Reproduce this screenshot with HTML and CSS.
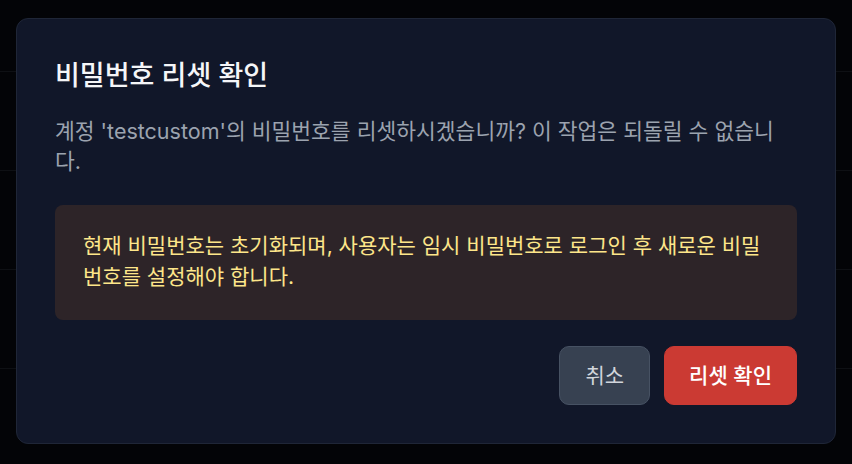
FILE: index.html
```html
<!DOCTYPE html>
<html lang="ko">
<head>
  <meta charset="UTF-8">
  <meta name="viewport" content="width=device-width, initial-scale=1.0">
  <title>비밀번호 리셋 확인</title>
  <link rel="stylesheet" href="styles.css">
</head>
<body>
  <div class="page">
    <div class="row"></div>
    <div class="row"></div>
    <div class="row"></div>
    <div class="row"></div>
  </div>

  <div class="overlay">
    <div class="modal">
      <h2 class="modal-title">비밀번호 리셋 확인</h2>
      <p class="modal-desc">계정 'testcustom'의 비밀번호를 리셋하시겠습니까? 이 작업은 되돌릴 수 없습니다.</p>
      <div class="warning">
        현재 비밀번호는 초기화되며, 사용자는 임시 비밀번호로 로그인 후 새로운 비밀번호를 설정해야 합니다.
      </div>
      <div class="actions">
        <button type="button" class="btn btn-cancel">취소</button>
        <button type="button" class="btn btn-confirm">리셋 확인</button>
      </div>
    </div>
  </div>
</body>
</html>
```

FILE: styles.css
```css
body {
  font-family: Inter, "Noto Sans CJK KR", sans-serif;
  margin: 0;
  padding: 0;
  background-color: #030407;
}
.page {
  height: 100vh;
  overflow: hidden;
  padding-top: 71px;
  box-sizing: border-box;
}
.row {
  height: 98px;
  border-top: 1px solid #0e1014;
}
.overlay {
  position: fixed;
  inset: 0;
  display: flex;
  justify-content: center;
  align-items: center;
  padding: 0 16px 3px;
}
.modal {
  width: 100%;
  box-sizing: border-box;
  background-color: #111729;
  border: 1px solid #1f2637;
  border-radius: 12px;
  padding: 39px 38px 38px;
}
.modal-title {
  margin: 0;
  color: #f5f6f8;
  font-size: 27px;
  font-weight: 500;
  line-height: 36px;
}
.modal-desc {
  margin: 22px 0 0;
  color: #9ca3af;
  font-size: 21.5px;
  line-height: 30px;
  max-width: 730px;
}
.warning {
  margin-top: 29px;
  background-color: #2d2428;
  border-radius: 8px;
  padding: 25px 28px 28px;
  color: #fde68a;
  font-size: 21px;
  line-height: 31px;
}
.actions {
  display: flex;
  justify-content: flex-end;
  gap: 14px;
  margin-top: 26px;
}
.btn {
  font-family: inherit;
  font-size: 21px;
  line-height: 29px;
  padding: 14px 24px;
  border-radius: 10px;
  cursor: pointer;
}
.btn-cancel {
  background-color: #374151;
  border: 1px solid #475263;
  color: #d1d5db;
  padding: 14px 25px;
}
.btn-confirm {
  background-color: #cb3a33;
  border: 1px solid #cb3a33;
  color: #ffffff;
  font-weight: 500;
}
```
